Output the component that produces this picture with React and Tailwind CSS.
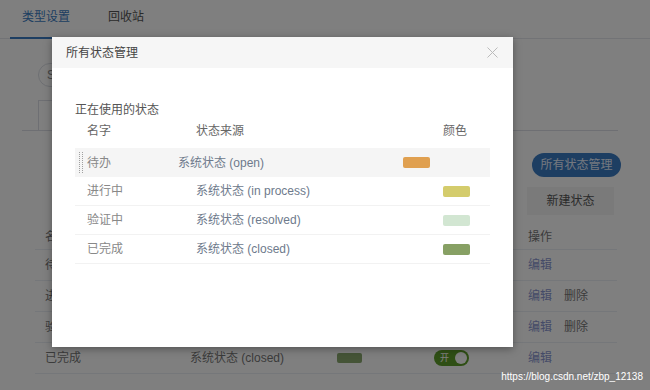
import React from 'react';

const font = { fontFamily: '"Liberation Sans", "Noto Sans CJK SC", sans-serif' };

const modalRows = [
  { name: '进行中', source: '系统状态 (in process)', color: '#d4cc6c' },
  { name: '验证中', source: '系统状态 (resolved)', color: '#d2e6d2' },
  { name: '已完成', source: '系统状态 (closed)', color: '#87a064' },
];

const pageRows = [
  { name: '待办', source: '系统状态 (open)', color: '#e0a050', del: false },
  { name: '进行中', source: '系统状态 (in process)', color: '#d4cc6c', del: true },
  { name: '验证中', source: '系统状态 (resolved)', color: '#d2e6d2', del: true },
  { name: '已完成', source: '系统状态 (closed)', color: '#8aa86e', del: false },
];

const Toggle = () => (
  <div className="flex items-center justify-between w-[35px] h-[16px] rounded-full bg-[#5f9e2a] pl-[6px] pr-[2px]">
    <span className="text-[9px] leading-none text-white">开</span>
    <span className="w-[12px] h-[12px] rounded-full bg-white" />
  </div>
);

const App = () => {
  return (
    <div className="relative w-[650px] h-[390px] overflow-hidden bg-white text-[12px]" style={font}>
      {/* Page behind the dialog */}
      <div className="flex items-end h-[39px] border-b border-[#e4e7ed] px-[10px]">
        <div className="px-[12px] pb-[11px] border-b-2 border-[#3a7cc4] text-[#3a7cc4] -mb-px">类型设置</div>
        <div className="ml-[14px] px-[12px] pb-[12px] text-[#555]">回收站</div>
      </div>

      <div className="pl-[22px] pr-[32px]">
        <div className="mt-[24px] ml-[16px] w-[180px] h-[24px] rounded-full border border-[#dcdfe6] flex items-center pl-[8px] text-[#888]">
          Search
        </div>
        <div className="mt-[13px] border-b border-[#dcdfe6]">
          <div className="ml-[16px] w-[110px] h-[30px] border border-b-0 border-[#dcdfe6]" />
        </div>
      </div>

      <div className="flex justify-end pr-[29px] mt-[22px]">
        <div className="w-[89px] h-[24px] rounded-full bg-[#3a7cc4] text-[#e8f0ff] flex items-center justify-center">所有状态管理</div>
      </div>
      <div className="flex justify-end pr-[36px] mt-[10px]">
        <div className="w-[87px] h-[28px] bg-[#f5f5f5] text-[#555] flex items-center justify-center">新建状态</div>
      </div>

      <div className="ml-[35px] w-[582px] mt-[9px] text-[#777]">
        <div className="flex items-center h-[26px] border-b border-[#ebeef5] pl-[10px]">
          <span className="w-[145px]">名称</span>
          <span className="w-[147px]">状态来源</span>
          <span className="w-[97px]">颜色</span>
          <span className="w-[94px]">状态</span>
          <span>操作</span>
        </div>
        {pageRows.map((r) => (
          <div key={r.name} className="flex items-center h-[31px] border-b border-[#ebeef5] pl-[10px]">
            <span className="w-[145px]">{r.name}</span>
            <span className="w-[147px]">{r.source}</span>
            <span className="w-[97px]">
              <span className="block w-[25px] h-[10px] rounded-[2px]" style={{ backgroundColor: r.color }} />
            </span>
            <span className="w-[94px]"><Toggle /></span>
            <span className="flex gap-[12px]">
              <span className="text-[#8a96d0]">编辑</span>
              {r.del && <span>删除</span>}
            </span>
          </div>
        ))}
      </div>

      {/* Mask */}
      <div className="absolute inset-0 bg-black/50" />

      {/* Dialog */}
      <div className="absolute left-[52px] top-[37px] w-[461px] h-[310px] bg-white shadow-[0_2px_8px_rgba(0,0,0,0.35)]">
        <div className="flex items-center justify-between h-[31px] bg-[#f6f6f6] pl-[14px] pr-[15px]">
          <span className="text-[12px] text-[#444]">所有状态管理</span>
          <svg width="11" height="11" viewBox="0 0 11 11" className="text-[#bbb]">
            <path d="M0.5 0.5 L10.5 10.5 M10.5 0.5 L0.5 10.5" stroke="currentColor" strokeWidth="1" />
          </svg>
        </div>

        <div className="px-[23px] pt-[34px]">
          <div className="leading-[16px] text-[#555]">正在使用的状态</div>
          <div className="flex items-center h-[20px] mt-[3px] pl-[12px] text-[#666]">
            <span className="w-[109px]">名字</span>
            <span className="w-[247px]">状态来源</span>
            <span>颜色</span>
          </div>

          <div className="mt-[7px]">
            <div className="flex items-center h-[29px] bg-[#f5f5f5] pl-[4px] text-[#888]">
              <span className="w-[4px] h-[21px] border-x border-dotted border-[#a0a0a0] mr-[4px]" />
              <span className="w-[91px]">待办</span>
              <span className="w-[225px] text-[#6e7a8c]">系统状态 (open)</span>
              <span className="block w-[27px] h-[11px] rounded-[2px] bg-[#e0a050]" />
            </div>
            {modalRows.map((r) => (
              <div key={r.name} className="flex items-center h-[29px] border-b border-[#f2f2f2] pl-[12px] text-[#888]">
                <span className="w-[109px]">{r.name}</span>
                <span className="w-[247px] text-[#6e7a8c]">{r.source}</span>
                <span className="block w-[27px] h-[11px] rounded-[2px]" style={{ backgroundColor: r.color }} />
              </div>
            ))}
          </div>
        </div>
      </div>

      <div className="absolute right-[7px] bottom-[6px] text-[10px] text-white">https://blog.csdn.net/zbp_12138</div>
    </div>
  );
};

export default App;
